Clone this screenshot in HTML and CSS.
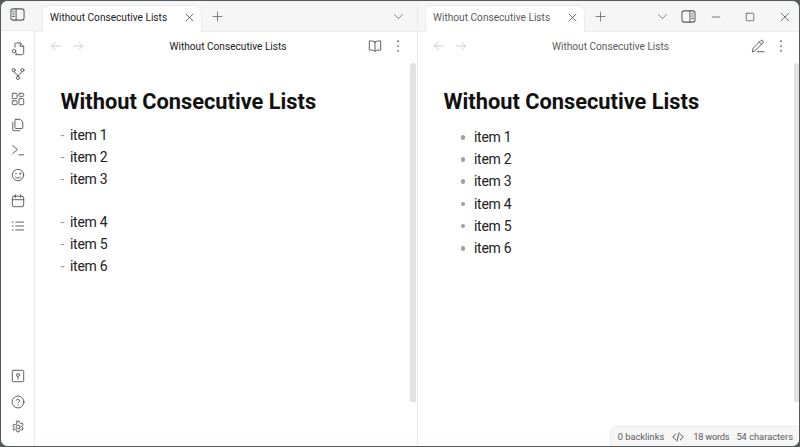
FILE: index.html
```html
<!DOCTYPE html>
<html lang="en">
<head>
<meta charset="utf-8">
<title>Without Consecutive Lists</title>
<link rel="stylesheet" href="styles.css">
</head>
<body>
<div class="window">
  <aside class="ribbon">
    <div class="ribbon-top">
      <svg class="icon sidebar-left" viewBox="0 0 16 16"><rect x="1" y="2" width="14" height="12" rx="2.5"/><path d="M6.500 2v12M3 5h1.500M3 7.500h1.500M3 10h1.500"/></svg>
    </div>
    <div class="ribbon-actions">
      <svg class="icon" viewBox="0 0 16 16"><path d="M5 14.500h8a1.500 1.500 0 0 0 1.500-1.500V5L10.500 1H6A1.500 1.500 0 0 0 4.500 2.500V6M10.500 1v4h4"/><circle cx="3.500" cy="10.500" r="2"/><path d="M5 12l1.500 1.500"/></svg>
      <svg class="icon" viewBox="0 0 16 16"><circle cx="3" cy="3.500" r="1.800"/><circle cx="13" cy="3.500" r="1.800"/><circle cx="8" cy="12.500" r="1.800"/><path d="M3.300 5.300C4 8 7.500 7 8 10.700M12.700 5.300C12 8 8.500 7 8 10.700"/></svg>
      <svg class="icon" viewBox="0 0 16 16"><rect x="1.500" y="1.500" width="5.500" height="6" rx="1"/><rect x="9" y="1.500" width="5.500" height="3.500" rx="1"/><rect x="1.500" y="10" width="5.500" height="4.500" rx="1"/><rect x="9" y="7.500" width="5.500" height="7" rx="1"/></svg>
      <svg class="icon" viewBox="0 0 16 16"><path d="M5.500 1.500h5l3 3V11a1 1 0 0 1-1 1h-7a1 1 0 0 1-1-1V2.500a1 1 0 0 1 1-1zM2 5v8.500a1 1 0 0 0 1 1h7"/></svg>
      <svg class="icon" viewBox="0 0 16 16"><path d="M2 3l5.500 4.500L2 12M9 13.500h5.500"/></svg>
      <svg class="icon" viewBox="0 0 16 16"><circle cx="8" cy="8" r="6.500"/><path d="M5 10.500c1.500 1.500 4.500 1.500 6 0M4.800 6.500c.5-.8 1.200-.8 1.700 0"/><circle cx="10.500" cy="6.500" r=".7"/></svg>
      <svg class="icon" viewBox="0 0 16 16"><rect x="1.500" y="2.500" width="13" height="12" rx="2"/><path d="M5 1v3M11 1v3M1.500 6.500h13"/></svg>
      <svg class="icon" viewBox="0 0 16 16"><path d="M5.500 3.500h9M5.500 8h9M5.500 12.500h9M1.500 3.500h1M1.500 8h1M1.500 12.500h1"/></svg>
    </div>
    <div class="ribbon-bottom">
      <svg class="icon" viewBox="0 0 16 16"><rect x="1.500" y="1.500" width="13" height="13" rx="1"/><circle cx="8" cy="6.800" r="1.700"/><path d="M8 8.500v3"/></svg>
      <svg class="icon" viewBox="0 0 16 16"><circle cx="8" cy="8" r="6.800"/><path d="M6 6a2 2 0 0 1 3.800.8c0 1.200-1.800 1.500-1.800 2.500M8 11.400v.4"/></svg>
      <svg class="icon" viewBox="0 0 16 16"><circle cx="8" cy="8" r="2.200"/><path d="M6.800 1.200h2.400l.4 2 1.300.7 1.900-.7 1.200 2.100-1.500 1.300v1.500l1.500 1.300-1.200 2.100-1.900-.7-1.300.7-.4 2H6.800l-.4-2-1.300-.7-1.900.7L2 10.900l1.500-1.300V8.100L2 6.800 3.200 4.700l1.900.7 1.300-.7z"/></svg>
    </div>
  </aside>

  <section class="pane pane-left">
    <header class="tabbar">
      <div class="tab">
        <span class="tab-title">Without Consecutive Lists</span>
        <svg class="icon tab-close" viewBox="0 0 16 16"><path d="M3 3l10 10M13 3L3 13"/></svg>
      </div>
      <svg class="icon tab-add" viewBox="0 0 16 16"><path d="M8 1.500v13M1.500 8h13"/></svg>
      <div class="tabbar-right">
        <svg class="icon chevron" viewBox="0 0 16 16"><path d="M2.500 5.500L8 11l5.500-5.500"/></svg>
      </div>
    </header>
    <nav class="viewbar">
      <div class="nav-arrows">
        <svg class="icon faint" viewBox="0 0 16 16"><path d="M14 8H2M7 3L2 8l5 5"/></svg>
        <svg class="icon faint" viewBox="0 0 16 16"><path d="M2 8h12M9 3l5 5-5 5"/></svg>
      </div>
      <div class="view-title">Without Consecutive Lists</div>
      <div class="view-actions">
        <svg class="icon" viewBox="0 0 16 16"><path d="M8 3.500C6.500 2.300 4 2 1.500 2.300v10.400C4 12.400 6.500 12.700 8 14c1.500-1.300 4-1.600 6.500-1.300V2.300C12 2 9.500 2.300 8 3.500zM8 3.500V14"/></svg>
        <svg class="icon dots" viewBox="0 0 16 16"><circle cx="8" cy="2.500" r="1"/><circle cx="8" cy="8" r="1"/><circle cx="8" cy="13.500" r="1"/></svg>
      </div>
    </nav>
    <div class="content">
      <main class="doc">
        <h1 class="doc-title">Without Consecutive Lists</h1>
        <div class="source-line"><span class="dash">-</span>item 1</div>
        <div class="source-line"><span class="dash">-</span>item 2</div>
        <div class="source-line"><span class="dash">-</span>item 3</div>
        <div class="source-line source-blank">&nbsp;</div>
        <div class="source-line"><span class="dash">-</span>item 4</div>
        <div class="source-line"><span class="dash">-</span>item 5</div>
        <div class="source-line"><span class="dash">-</span>item 6</div>
      </main>
      <div class="scrollbar"></div>
    </div>
  </section>

  <section class="pane pane-right">
    <header class="tabbar">
      <div class="tab">
        <span class="tab-title muted">Without Consecutive Lists</span>
        <svg class="icon tab-close" viewBox="0 0 16 16"><path d="M3 3l10 10M13 3L3 13"/></svg>
      </div>
      <svg class="icon tab-add" viewBox="0 0 16 16"><path d="M8 1.500v13M1.500 8h13"/></svg>
      <div class="tabbar-right">
        <svg class="icon chevron" viewBox="0 0 16 16"><path d="M2.500 5.500L8 11l5.500-5.500"/></svg>
        <svg class="icon sidebar-toggle" viewBox="0 0 16 16"><rect x="1" y="2" width="14" height="12" rx="2.500"/><path d="M9.500 2v12M11.500 5H13M11.500 7.500H13M11.500 10H13"/></svg>
        <svg class="icon win-min" viewBox="0 0 16 16"><path d="M3 8h10"/></svg>
        <svg class="icon win-max" viewBox="0 0 16 16"><rect x="3" y="3" width="10" height="10" rx="1"/></svg>
        <svg class="icon win-close" viewBox="0 0 16 16"><path d="M3 3l10 10M13 3L3 13"/></svg>
      </div>
    </header>
    <nav class="viewbar">
      <div class="nav-arrows">
        <svg class="icon faint" viewBox="0 0 16 16"><path d="M14 8H2M7 3L2 8l5 5"/></svg>
        <svg class="icon faint" viewBox="0 0 16 16"><path d="M2 8h12M9 3l5 5-5 5"/></svg>
      </div>
      <div class="view-title muted">Without Consecutive Lists</div>
      <div class="view-actions">
        <svg class="icon" viewBox="0 0 16 16"><path d="M1.500 14.500l1-4L11 2a1.500 1.500 0 0 1 2.500 2.500L5 13zM9.500 3.500l2.500 2.500M7 14.500h8"/></svg>
        <svg class="icon dots" viewBox="0 0 16 16"><circle cx="8" cy="2.500" r="1"/><circle cx="8" cy="8" r="1"/><circle cx="8" cy="13.500" r="1"/></svg>
      </div>
    </nav>
    <div class="content">
      <main class="doc">
        <h1 class="doc-title">Without Consecutive Lists</h1>
        <ul class="preview-list">
          <li>item 1</li>
          <li>item 2</li>
          <li>item 3</li>
          <li>item 4</li>
          <li>item 5</li>
          <li>item 6</li>
        </ul>
      </main>
      <div class="scrollbar scrollbar-short"></div>
      <footer class="status">
        <span>0 backlinks</span>
        <svg class="icon code" viewBox="0 0 16 16"><path d="M5 4L1 8l4 4M11 4l4 4-4 4M9.500 2.500l-3 11"/></svg>
        <span class="status-tight">18 words</span>
        <span>54 characters</span>
      </footer>
    </div>
  </section>
</div>
</body>
</html>
```
FILE: styles.css
```css
* { box-sizing: border-box; }
html, body { margin: 0; height: 100%; }
body {
  background: #555a5c;
  font-family: Roboto, "Open Sans", sans-serif;
  overflow: hidden;
}
.window {
  height: 445px;
  margin: 1px 1px 0 1px;
  display: flex;
  background: #fff;
  border-radius: 7px;
  overflow: hidden;
}
.icon {
  width: 14px;
  height: 14px;
  fill: none;
  stroke: #5c5c5c;
  stroke-width: 1.100;
  stroke-linecap: round;
  stroke-linejoin: round;
  flex: none;
}
.faint { stroke: #c4c4c4; width: 12px; height: 12px; }
.dots { fill: #5c5c5c; stroke: none; }
.muted { color: #5c5c5c; }

.ribbon {
  width: 34px;
  flex: none;
  display: flex;
  flex-direction: column;
  align-items: center;
  border-right: 1px solid #ebebeb;
  background: #fff;
}
.ribbon-top {
  width: 34px;
  height: 30px;
  background: #f6f6f6;
  display: flex;
  align-items: center;
  justify-content: center;
  padding: 0 1px 2px 0;
  border-bottom: 1px solid #ebebeb;
  margin-right: -1px;
}
.sidebar-left { width: 15px; height: 15px; }
.ribbon-actions {
  display: flex;
  flex-direction: column;
  gap: 11.400px;
  padding-top: 10.500px;
  align-items: center;
}
.ribbon-bottom {
  margin-top: auto;
  display: flex;
  flex-direction: column;
  gap: 11.500px;
  padding-bottom: 12px;
  align-items: center;
}

.pane { display: flex; flex-direction: column; min-width: 0; }
.pane-left { width: 383px; border-right: 1px solid #ebebeb; flex: none; }
.pane-right { flex: 1; }

.tabbar {
  height: 31px;
  flex: none;
  display: flex;
  align-items: center;
  background: #f6f6f6;
  border-bottom: 1px solid #ebebeb;
  padding: 4px 0 0 7px;
}
.tab {
  width: 160px;
  height: 27px;
  background: #fff;
  border: 1px solid #ebebeb;
  border-bottom: none;
  border-radius: 7px 7px 0 0;
  display: flex;
  align-items: center;
  justify-content: space-between;
  padding: 0 6px 3px 7px;
  margin-bottom: -1px;
  position: relative;
}
.tab-title { font-size: 10.150px; color: #222; white-space: nowrap; }
.tab-title.muted { color: #5c5c5c; }
.tab-close { width: 11px; height: 11px; stroke: #444; }
.tab-add { width: 11px; height: 11px; margin-left: 10px; margin-top: -3px; }
.tabbar-right {
  margin-left: auto;
  margin-top: -3px;
  display: flex;
  align-items: center;
  padding-right: 8px;
}
.pane-left .tabbar-right { padding-right: 13px; }
.chevron { width: 11px; height: 11px; }
.sidebar-toggle { width: 15px; height: 15px; margin-left: 13px; }
.win-min { width: 12px; height: 12px; margin-left: 14px; }
.win-max { width: 12px; height: 12px; margin-left: 22px; }
.win-close { width: 12px; height: 12px; margin-left: 23px; }

.viewbar {
  height: 28px;
  flex: none;
  display: flex;
  align-items: center;
  position: relative;
  padding: 0 12px 0 15px;
  background: #fff;
}
.pane-right .viewbar { padding-right: 11px; }
.nav-arrows { display: flex; gap: 10px; }
.view-title {
  position: absolute;
  left: 4px;
  right: 0;
  text-align: center;
  font-size: 10.150px;
  color: #222;
  pointer-events: none;
}
.view-title.muted { color: #5c5c5c; }
.view-actions {
  margin-left: auto;
  display: flex;
  align-items: center;
  gap: 9px;
}

.content { flex: 1; position: relative; min-height: 0; }
.doc { padding: 29px 0 0 25.500px; }
.doc-title {
  font-size: 21.800px;
  font-weight: 700;
  line-height: 26px;
  margin: 0 0 9px;
  color: #111;
  white-space: nowrap;
}
.source-line {
  font-size: 14px;
  letter-spacing: -.3px;
  line-height: 22px;
  height: 22.200px;
  color: #222;
  white-space: nowrap;
}
.source-blank { height: 20px; }
.dash { display: inline-block; width: 9.500px; color: #999; }
.preview-list {
  list-style: none;
  margin: 0;
  padding: 2px 0 0 30.500px;
}
.preview-list li {
  font-size: 14px;
  letter-spacing: -.3px;
  line-height: 22.200px;
  color: #222;
  position: relative;
}
.preview-list li::before {
  content: "";
  position: absolute;
  left: -13.500px;
  top: 9px;
  width: 4.500px;
  height: 4.500px;
  border-radius: 50%;
  background: #9aa0a6;
}
.scrollbar {
  position: absolute;
  top: 3px;
  right: 1px;
  width: 6px;
  height: 339px;
  background: #e2e2e2;
  border-radius: 3px 3px 0 0;
}
.scrollbar-short { right: 0; width: 5px; }
.status {
  position: absolute;
  right: 0;
  bottom: 0;
  height: 20px;
  display: flex;
  align-items: center;
  gap: 7px;
  padding: 0 6px 0 7px;
  background: #f6f6f6;
  border: 1px solid #ebebeb;
  border-right: none;
  border-bottom: none;
  border-radius: 7px 0 0 0;
  font-size: 9.300px;
  color: #5c5c5c;
  white-space: nowrap;
}
.status-tight { letter-spacing: -.25px; }
.code { width: 12px; height: 12px; stroke: #333; margin: 0 2px 0 1px; }
```
